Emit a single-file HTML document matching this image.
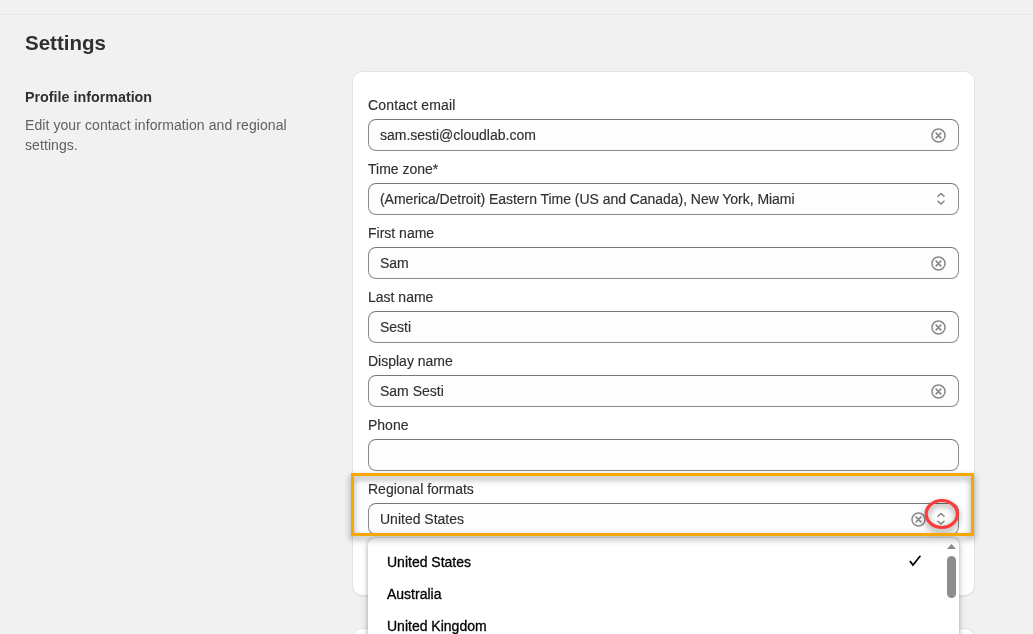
<!DOCTYPE html>
<html><head><meta charset="utf-8">
<style>
*{box-sizing:border-box;margin:0;padding:0}
html,body{width:1033px;height:634px;overflow:hidden;background:#f1f1f1;font-family:"Liberation Sans",sans-serif;color:#303030;-webkit-font-smoothing:antialiased}
.abs{position:absolute}
.wrap{position:absolute;left:0;top:0;width:1033px;height:634px;will-change:transform}
.hdr{position:absolute;left:0;top:14px;width:1033px;height:1px;background:#e8e8e8}
.title{position:absolute;left:25px;top:30px;font-size:20.5px;font-weight:bold;color:#303030;line-height:26px;white-space:nowrap}
.ph{position:absolute;left:25px;top:88px;font-size:14.3px;font-weight:bold;color:#303030;line-height:18px;white-space:nowrap}
.pd{position:absolute;left:25px;top:115px;font-size:14px;color:#616161;line-height:20px;width:320px;letter-spacing:0.08px}
.card{position:absolute;left:352px;top:71px;width:623px;height:525px;background:#fff;border-radius:10px;box-shadow:inset 0 0 0 1px #e3e3e3, inset 0 -1px 0 #d4d4d4, 0 1px 0 rgba(0,0,0,0.05)}
.card2{position:absolute;left:352px;top:628px;width:623px;height:100px;background:#fff;border-radius:10px;box-shadow:inset 0 0 0 1px #e3e3e3}
.lbl{position:absolute;left:368px;font-size:14px;color:#303030;line-height:16px;white-space:nowrap;-webkit-text-stroke:0.15px #303030}
.inp{position:absolute;left:368px;width:591px;height:32px;border:1px solid #8a8a8a;border-top-color:#777;border-radius:8px;background:#fdfdfd}
.val{position:absolute;left:380px;font-size:14px;color:#303030;line-height:16px;white-space:nowrap;-webkit-text-stroke:0.15px #303030}
svg{position:absolute;overflow:visible}
.dd{position:absolute;left:368px;top:538px;width:591px;height:120px;background:#fff;border-radius:7px 7px 0 0;box-shadow:0 0 4px rgba(0,0,0,0.25), 0 2px 8px rgba(0,0,0,0.15)}
.opt{position:absolute;left:387px;font-size:14px;color:#000;line-height:16px;white-space:nowrap;-webkit-text-stroke:0.3px #000}
</style></head><body><div class="wrap">
<div class="hdr"></div>
<div class="title">Settings</div>
<div class="ph">Profile information</div>
<div class="pd">Edit your contact information and regional<br>settings.</div>
<div class="card2"></div>
<div class="card"></div>

<div class="lbl" style="top:97px;letter-spacing:0.15px">Contact email</div>
<div class="inp" style="top:119px"></div>
<div class="val" style="top:127px">sam.sesti@cloudlab.com</div>
<svg style="left:931px;top:128px" width="15" height="15" viewBox="0 0 15 15"><circle cx="7.5" cy="7.5" r="6.5" fill="none" stroke="#8a8a8a" stroke-width="1.5"/><path d="M5.2 5.2L9.8 9.8M9.8 5.2L5.2 9.8" stroke="#8a8a8a" stroke-width="1.7" stroke-linecap="round"/></svg>

<div class="lbl" style="top:161px">Time zone*</div>
<div class="inp" style="top:183px"></div>
<div class="val" style="top:191px;letter-spacing:-0.04px">(America/Detroit) Eastern Time (US and Canada), New York, Miami</div>
<svg style="left:933px;top:191px" width="16" height="16" viewBox="0 0 16 16"><path d="M5 5.2L8 2.5L11 5.2M5 10.3L8 13L11 10.3" fill="none" stroke="#7f7f7f" stroke-width="1.5" stroke-linecap="round" stroke-linejoin="round"/></svg>

<div class="lbl" style="top:225px">First name</div>
<div class="inp" style="top:247px"></div>
<div class="val" style="top:255px">Sam</div>
<svg style="left:931px;top:256px" width="15" height="15" viewBox="0 0 15 15"><circle cx="7.5" cy="7.5" r="6.5" fill="none" stroke="#8a8a8a" stroke-width="1.5"/><path d="M5.2 5.2L9.8 9.8M9.8 5.2L5.2 9.8" stroke="#8a8a8a" stroke-width="1.7" stroke-linecap="round"/></svg>

<div class="lbl" style="top:289px">Last name</div>
<div class="inp" style="top:311px"></div>
<div class="val" style="top:319px">Sesti</div>
<svg style="left:931px;top:320px" width="15" height="15" viewBox="0 0 15 15"><circle cx="7.5" cy="7.5" r="6.5" fill="none" stroke="#8a8a8a" stroke-width="1.5"/><path d="M5.2 5.2L9.8 9.8M9.8 5.2L5.2 9.8" stroke="#8a8a8a" stroke-width="1.7" stroke-linecap="round"/></svg>

<div class="lbl" style="top:353px">Display name</div>
<div class="inp" style="top:375px"></div>
<div class="val" style="top:383px">Sam Sesti</div>
<svg style="left:931px;top:384px" width="15" height="15" viewBox="0 0 15 15"><circle cx="7.5" cy="7.5" r="6.5" fill="none" stroke="#8a8a8a" stroke-width="1.5"/><path d="M5.2 5.2L9.8 9.8M9.8 5.2L5.2 9.8" stroke="#8a8a8a" stroke-width="1.7" stroke-linecap="round"/></svg>

<div class="lbl" style="top:417px">Phone</div>
<div class="inp" style="top:439px"></div>

<div class="lbl" style="top:481px">Regional formats</div>
<div class="inp" style="top:503px"></div>
<div class="val" style="top:511px">United States</div>
<svg style="left:911px;top:512px" width="15" height="15" viewBox="0 0 15 15"><circle cx="7.5" cy="7.5" r="6.5" fill="none" stroke="#8a8a8a" stroke-width="1.5"/><path d="M5.2 5.2L9.8 9.8M9.8 5.2L5.2 9.8" stroke="#8a8a8a" stroke-width="1.7" stroke-linecap="round"/></svg>
<svg style="left:933px;top:511px" width="16" height="16" viewBox="0 0 16 16"><path d="M5 5.2L8 2.5L11 5.2M5 10.3L8 13L11 10.3" fill="none" stroke="#7f7f7f" stroke-width="1.5" stroke-linecap="round" stroke-linejoin="round"/></svg>

<!-- dropdown -->
<div class="dd"></div>
<div class="opt" style="top:554px">United States</div>
<div class="opt" style="top:586px">Australia</div>
<div class="opt" style="top:618px">United Kingdom</div>
<svg style="left:908px;top:554px" width="14" height="14" viewBox="0 0 14 14"><path d="M2.3 7.4L5 11.1L12 2.3" fill="none" stroke="#000" stroke-width="1.7" stroke-linecap="round"/></svg>
<svg style="left:946px;top:543px" width="11" height="7" viewBox="0 0 11 7"><path d="M1 6L5.5 1L10 6Z" fill="#8a8a8a"/></svg>
<div class="abs" style="left:947px;top:556px;width:9px;height:42px;background:#8d8d8d;border-radius:4.5px"></div>

<!-- annotations -->
<svg style="left:0;top:0;filter:drop-shadow(0 3px 3px rgba(0,0,0,0.45))" width="1033" height="634"><rect x="352.5" y="474.5" width="620" height="60" fill="none" stroke="#f6a800" stroke-width="3"/><ellipse cx="941.8" cy="514" rx="15.6" ry="13.5" fill="none" stroke="#fd3b3b" stroke-width="3.2"/></svg>
</div></body></html>
